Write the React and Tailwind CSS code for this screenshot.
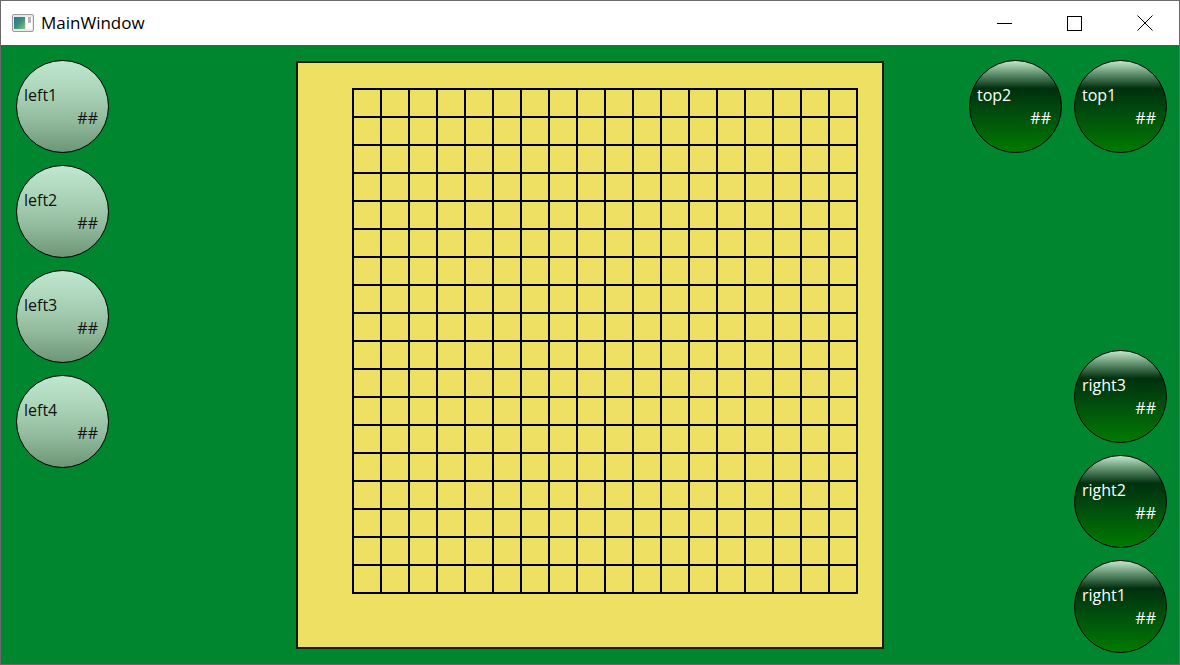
import React from 'react';

const FONT = { fontFamily: '"Open Sans", "Noto Sans", Arial, sans-serif' };

const leftBalls = ['left1', 'left2', 'left3', 'left4'];
const rightBalls = ['right3', 'right2', 'right1'];

function Ball({ label, dark }) {
  return (
    <div
      className={
        'box-border flex h-[93px] w-[93px] shrink-0 flex-col rounded-full border border-black pt-[23px] text-[16px] leading-[23px] ' +
        (dark
          ? 'bg-[linear-gradient(to_bottom,#c3e6cb_0%,#6f9e7c_12%,#00300d_30%,#004a0e_55%,#007c00_100%)] text-white'
          : 'bg-[linear-gradient(to_bottom,#c0e7d0_0%,#a9d3b7_35%,#93bb9e_65%,#6c9676_100%)] text-[#111]')
      }
    >
      <span className="pl-[7px]">{label}</span>
      <span className="self-end pr-[10px]">##</span>
    </div>
  );
}

function AppIcon() {
  return (
    <svg width="22" height="18" viewBox="0 0 22 18">
      <defs>
        <linearGradient id="ig" x1="0" y1="0" x2="1" y2="1">
          <stop offset="0" stopColor="#2f6f9e" />
          <stop offset="0.5" stopColor="#3d8f7a" />
          <stop offset="1" stopColor="#8fc27a" />
        </linearGradient>
      </defs>
      <rect x="0.5" y="0.5" width="21" height="17" rx="1.5" fill="#e9e9e9" stroke="#9a9a9a" />
      <rect x="2" y="3" width="11" height="12" fill="url(#ig)" />
      <rect x="14" y="3" width="6" height="12" fill="#ffffff" />
      <rect x="16" y="3" width="3" height="6" fill="#b5b5b5" />
    </svg>
  );
}

function Board() {
  const lines = [];
  for (let i = 0; i <= 18; i++) {
    const p = 1 + i * 28;
    lines.push(<line key={'v' + i} x1={p} y1={1} x2={p} y2={505} />);
    lines.push(<line key={'h' + i} x1={1} y1={p} x2={505} y2={p} />);
  }
  return (
    <div className="mt-[16px] box-border h-[588px] w-[588px] shrink-0 border-2 border-[#1c1a05] bg-[#eee063] pl-[54px] pt-[25px]">
      <svg width="506" height="506" viewBox="0 0 506 506">
        <g stroke="#000" strokeWidth="2" strokeLinecap="square">
          {lines}
        </g>
      </svg>
    </div>
  );
}

export default function App() {
  return (
    <div style={FONT} className="box-border flex h-[665px] w-[1180px] flex-col border border-[#6a6a6a] bg-white">
      <div className="flex h-[44px] shrink-0 items-center bg-white">
        <div className="ml-[11px] mt-[-1px]">
          <AppIcon />
        </div>
        <span className="ml-[7px] text-[17px] text-black">MainWindow</span>
        <div className="ml-auto flex h-full">
          <div className="flex w-[70px] items-center justify-center">
            <svg width="15" height="15" viewBox="0 0 15 15">
              <line x1="0" y1="7.5" x2="15" y2="7.5" stroke="#000" strokeWidth="1" />
            </svg>
          </div>
          <div className="flex w-[70px] items-center justify-center">
            <svg width="15" height="15" viewBox="0 0 15 15">
              <rect x="0.5" y="0.5" width="14" height="14" fill="none" stroke="#000" strokeWidth="1" />
            </svg>
          </div>
          <div className="flex w-[70px] items-center justify-center pl-[2px]">
            <svg width="16" height="16" viewBox="0 0 16 16">
              <path d="M0.5 0.5 L15.5 15.5 M15.5 0.5 L0.5 15.5" stroke="#000" strokeWidth="1" fill="none" />
            </svg>
          </div>
        </div>
      </div>

      <div className="flex flex-1 bg-[#00862f]">
        <div className="flex flex-col gap-[12px] pl-[15px] pt-[15px]">
          {leftBalls.map((l) => (
            <Ball key={l} label={l} />
          ))}
        </div>

        <div className="ml-[187px]">
          <Board />
        </div>

        <div className="flex flex-1 flex-col justify-between pb-[11px] pr-[12px] pt-[15px]">
          <div className="flex justify-end gap-[12px]">
            <Ball label="top2" dark />
            <Ball label="top1" dark />
          </div>
          <div className="flex flex-col items-end gap-[12px]">
            {rightBalls.map((l) => (
              <Ball key={l} label={l} dark />
            ))}
          </div>
        </div>
      </div>
    </div>
  );
}
